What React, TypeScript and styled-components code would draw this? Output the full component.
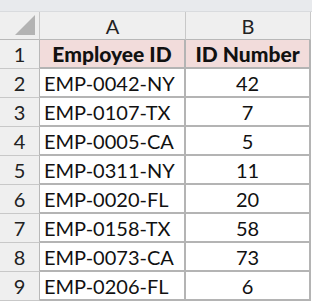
import React from 'react';
import styled, { createGlobalStyle } from 'styled-components';

const GlobalStyle = createGlobalStyle`
    html, body {
        margin: 0;
        padding: 0;
        background: #ffffff;
    }
    body {
        font-family: Lato, 'Liberation Sans', sans-serif;
    }
`;

const rows: { id: string; num: number }[] = [
    { id: 'EMP-0042-NY', num: 42 },
    { id: 'EMP-0107-TX', num: 7 },
    { id: 'EMP-0005-CA', num: 5 },
    { id: 'EMP-0311-NY', num: 11 },
    { id: 'EMP-0020-FL', num: 20 },
    { id: 'EMP-0158-TX', num: 58 },
    { id: 'EMP-0073-CA', num: 73 },
    { id: 'EMP-0206-FL', num: 6 },
];

const App: React.FC = () => {
    return (
        <>
            <GlobalStyle />
            <StyledTopBand />
            <StyledSheet>
                <StyledCorner>
                    <StyledTriangle />
                </StyledCorner>
                <StyledColHead>A</StyledColHead>
                <StyledColHead>B</StyledColHead>

                <StyledRowHead>1</StyledRowHead>
                <StyledCell $head>Employee ID</StyledCell>
                <StyledCell $head $center>
                    ID Number
                </StyledCell>

                {rows.map((r, i) => (
                    <React.Fragment key={r.id}>
                        <StyledRowHead>{i + 2}</StyledRowHead>
                        <StyledCell>{r.id}</StyledCell>
                        <StyledCell $center>{r.num}</StyledCell>
                    </React.Fragment>
                ))}
            </StyledSheet>
        </>
    );
};

export default App;

const StyledTopBand = styled.div`
    height: 11px;
    background: #e8eaed;
    border-bottom: 1px solid #d9dbde;
`;

const StyledSheet = styled.div`
    display: grid;
    grid-template-columns: 40px 146px 125px;
    grid-template-rows: 28px repeat(9, 29px);
    font-size: 20px;
    color: #111;
`;

const StyledCorner = styled.div`
    position: relative;
    background: #efefef;
    border-right: 1px solid #c8c8c8;
    border-bottom: 1px solid #b8b8b8;
`;

const StyledTriangle = styled.div`
    position: absolute;
    right: 4px;
    bottom: 4px;
    width: 20px;
    height: 20px;
    background: #b3b3b3;
    clip-path: polygon(100% 0, 100% 100%, 0 100%);
`;

const StyledColHead = styled.div`
    display: flex;
    align-items: center;
    justify-content: center;
    background: #efefef;
    border-right: 1px solid #c8c8c8;
    border-bottom: 1px solid #b8b8b8;
    color: #222;
`;

const StyledRowHead = styled.div`
    display: flex;
    align-items: center;
    justify-content: center;
    background: #efefef;
    border-right: 1px solid #b8b8b8;
    border-bottom: 1px solid #c8c8c8;
    color: #222;
`;

const StyledCell = styled.div<{ $head?: boolean; $center?: boolean }>`
    display: flex;
    align-items: center;
    justify-content: ${({ $center, $head }) =>
        $center || $head ? 'center' : 'flex-start'};
    padding-left: ${({ $center, $head }) => ($center || $head ? '0' : '4px')};
    background: ${({ $head }) => ($head ? '#f2dcdb' : '#ffffff')};
    font-weight: ${({ $head }) => ($head ? 900 : 400)};
    font-size: ${({ $head }) => ($head ? '21px' : '20px')};
    border-right: 2px solid #b4b4b4;
    border-bottom: 2px solid #b4b4b4;
    white-space: nowrap;
`;
